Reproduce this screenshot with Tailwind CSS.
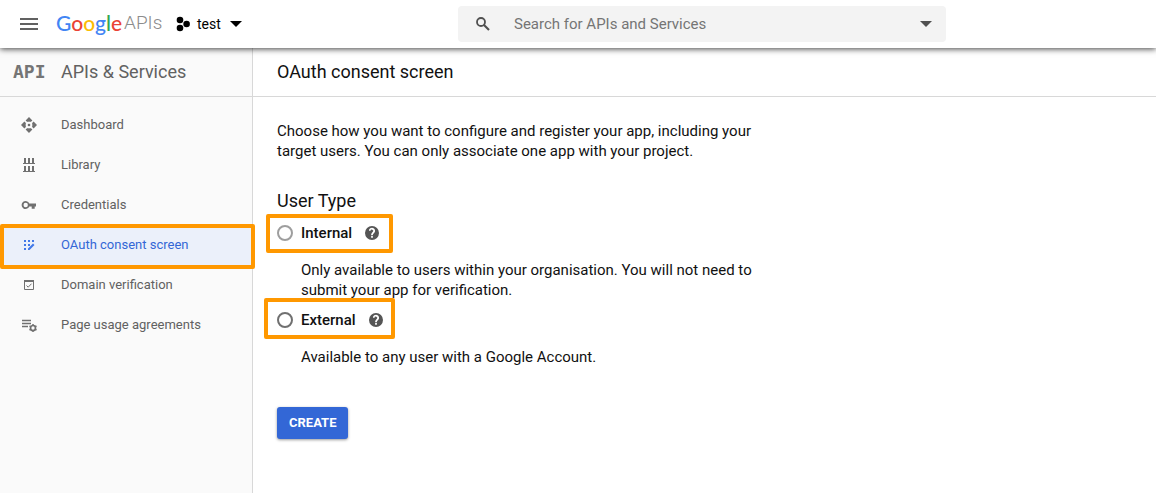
<!DOCTYPE html>
<html lang="en">
<head>
<meta charset="utf-8">
<meta name="viewport" content="width=device-width, initial-scale=1">
<title>OAuth consent screen</title>
<script src="https://cdn.jsdelivr.net/npm/@tailwindcss/browser@4"></script>
</head>
<body class="flex min-h-screen flex-col bg-white font-['Roboto',sans-serif] text-[#111]">
<header class="relative z-10 flex h-12 shrink-0 items-center bg-white shadow-[0_1px_6px_rgba(0,0,0,0.75)]">
  <div class="flex w-[458px] shrink-0 items-center pl-5">
    <button type="button" aria-label="Menu" class="mr-[18px]">
      <svg class="block h-3 w-[18px]" viewBox="0 0 18 12" fill="#616161"><path d="M0 0h18v2H0zM0 5h18v2H0zM0 10h18v2H0z"/></svg>
    </button>
    <a href="#" class="flex h-8 w-[120px] items-center whitespace-nowrap pb-[2px] leading-8">
      <span class="w-[68px] font-['Lato',sans-serif] text-[21px] font-medium"><span class="text-[#4285f4]">G</span><span class="text-[#ea4335]">o</span><span class="text-[#fbbc05]">o</span><span class="text-[#4285f4]">g</span><span class="text-[#34a853]">l</span><span class="text-[#ea4335]">e</span></span>
      <span class="text-[19px] font-light text-[#8c8c8c]">APIs</span>
    </a>
    <button type="button" class="flex items-center text-sm leading-5 text-black">
      <svg class="mr-[7px] block h-4 w-[14px]" viewBox="0 0 14 16"><circle cx="4" cy="4" r="3.3"/><circle cx="4" cy="12" r="3.3"/><circle cx="10.6" cy="8" r="3.3"/></svg>
      test
      <svg class="ml-[9px] block h-[6px] w-3" viewBox="0 0 12 6"><path d="M0 0h12L6 6z"/></svg>
    </button>
  </div>
  <form class="flex h-9 w-[488px] items-center rounded-sm bg-[#f3f3f3] pl-[18px] pr-[14px]">
    <label for="search" class="mr-6">
      <svg class="block h-[14px] w-[14px]" viewBox="0 0 14 14" fill="none" stroke="#505050"><circle cx="5" cy="5" r="4" stroke-width="1.8"/><path d="M8 8l5 5" stroke-width="2.1"/></svg>
    </label>
    <input id="search" type="text" aria-label="Search" placeholder="Search for APIs and Services" class="min-w-0 flex-1 bg-transparent pb-px text-[15px] leading-5 outline-none placeholder:text-[#757575]">
    <button type="button" aria-label="Search options"><svg class="block h-[6px] w-3" viewBox="0 0 12 6" fill="#505050"><path d="M0 0h12L6 6z"/></svg></button>
  </form>
</header>
<div class="flex flex-1">
  <aside class="w-[253px] shrink-0 border-r border-[#d8d8d8] bg-[#fafafa]">
    <div class="flex h-[49px] items-center border-b border-[#d8d8d8] pl-[13px]">
      <span class="w-12 font-['DejaVu_Sans_Mono',monospace] text-lg font-bold leading-6 text-[#757575]">API</span>
      <h2 class="text-lg leading-6 text-[#616161]">APIs &amp; Services</h2>
    </div>
    <nav class="pt-2 text-[13px] leading-5 text-[#616161]">
      <a href="#" class="flex h-10 items-center pl-[21px]">
        <svg class="mr-6 block h-4 w-4" viewBox="0 0 16 16" fill="#707070"><path d="M8 0l3.400 3.400L9.700 5.100 8 3.700 6.300 5.100 4.600 3.400zM8 16l3.400-3.400-1.700-1.700L8 12.300l-1.700-1.400-1.700 1.700zM0 8l3.400-3.400 1.700 1.700L3.700 8l1.400 1.700-1.700 1.700zM16 8l-3.400-3.400-1.700 1.700L12.300 8l-1.400 1.700 1.700 1.700z"/><path d="M8 1l2.200 2.400L8 5 5.800 3.400zM8 15l2.200-2.400L8 11l-2.200 1.600zM1 8l2.400-2.200L5 8l-1.600 2.200zM15 8l-2.400-2.200L11 8l1.600 2.200z"/><circle cx="8" cy="8" r="1.300"/></svg>Dashboard</a>
      <a href="#" class="flex h-10 items-center pl-[21px]">
        <svg class="mr-6 block h-4 w-4" viewBox="0 0 16 16" fill="#707070"><path d="M3 1h2v5h2V1h2v5h2V1h2v5h1v1H2V6h1zM3 9h2v5h2V9h2v5h2V9h2v5h1v1H2v-1h1z"/></svg>Library</a>
      <a href="#" class="flex h-10 items-center pl-[21px]">
        <svg class="mr-6 block h-4 w-4" viewBox="0 0 16 16" fill="#707070"><path fill-rule="evenodd" d="M8.300 6.500H15v3h-1.300v2.200h-3V9.500H8.300A4 4 0 1 1 8.300 6.500zM4.700 5.800a2.200 2.200 0 1 0 0 4.400 2.200 2.200 0 0 0 0-4.400z"/></svg>Credentials</a>
      <a href="#" aria-current="page" class="relative flex h-10 items-center bg-[#ebf0fa] pl-[21px] text-[#3367d6]">
        <svg class="mr-6 block h-4 w-4" viewBox="0 0 16 16" fill="#4279e8"><path d="M3 3h2v2H3zM7 3h2v2H7zM11 3h2v2h-2zM3 7h2v2H3zM7 7h2v2H7zM3 11h2v2H3zM7 11.500l5-5 1.500 1.500-5 5H7z"/></svg>OAuth consent screen
        <span class="pointer-events-none absolute -top-px left-0 -right-[3px] h-[45px] rounded-xs border-4 border-[#ff9800]"></span></a>
      <a href="#" class="flex h-10 items-center pl-[21px]">
        <svg class="mr-6 block h-4 w-4" viewBox="0 0 16 16" fill="none" stroke="#707070"><path d="M3.500 3.500h9v9h-9z"/><path d="M3 4h10" stroke-width="2"/><path d="M5.500 8.500l1.700 1.700 3.300-3.500"/></svg>Domain verification</a>
      <a href="#" class="flex h-10 items-center pl-[21px]">
        <svg class="mr-6 block h-4 w-4" viewBox="0 0 16 16" fill="none" stroke="#707070"><path d="M1 3.500h9M1 6.500h9M1 9.500h6" stroke-width="1.500"/><circle cx="12" cy="11" r="2.500" stroke-width="1.700"/><path d="M12 7v1.500M12 13.500V15M8.500 9l1.300.7M14.200 12.300l1.300.7M8.500 13l1.300-.7M14.200 9.700l1.300-.7" stroke-width="1.500"/></svg>Page usage agreements</a>
    </nav>
  </aside>
  <main class="min-w-0 flex-1 text-[15px] leading-5">
    <div class="flex h-[49px] items-center border-b border-[#d8d8d8] px-6"><h1 class="text-lg leading-6">OAuth consent screen</h1></div>
    <div class="max-w-[536px] px-6 pt-6">
      <p>Choose how you want to configure and register your app, including your target users. You can only associate one app with your project.</p>
      <fieldset>
        <legend class="pt-7 text-lg leading-6">User Type</legend>
        <div class="relative mt-2 flex h-6 w-fit items-center">
          <input id="internal" type="radio" name="type" class="h-4 w-4 appearance-none rounded-full border-2 border-[#9e9e9e] bg-white">
          <label for="internal" class="ml-2 font-medium">Internal</label>
          <button type="button" aria-label="Help with internal" class="ml-3"><svg class="block h-4 w-4" viewBox="0 0 24 24" fill="#555"><path d="M12 1.500A10.500 10.500 0 1 0 12 22.500 10.500 10.500 0 0 0 12 1.500zm1.300 17.500h-2.600v-2.600h2.600zm2.200-7.300l-1 1c-.8.800-1.200 1.300-1.200 2.600h-2.600v-.6c0-1.300.5-2.300 1.300-3.100l1.300-1.400a2 2 0 1 0-3.500-1.400H7.400a4.600 4.600 0 1 1 8.100 2.900z"/></svg></button>
          <span class="pointer-events-none absolute -bottom-2 -left-[11px] -right-[13px] -top-[7px] rounded-xs border-4 border-[#ff9800]"></span>
        </div>
        <p class="pl-6 pt-[15px]">Only available to users within your organisation. You will not need to submit your app for verification.</p>
        <div class="relative mt-2 flex h-6 w-fit items-center">
          <input id="external" type="radio" name="type" class="h-4 w-4 appearance-none rounded-full border-2 border-[#707070] bg-white">
          <label for="external" class="ml-2 font-medium">External</label>
          <button type="button" aria-label="Help with external" class="ml-3"><svg class="block h-4 w-4" viewBox="0 0 24 24" fill="#555"><path d="M12 1.500A10.500 10.500 0 1 0 12 22.500 10.500 10.500 0 0 0 12 1.500zm1.300 17.500h-2.600v-2.600h2.600zm2.200-7.300l-1 1c-.8.800-1.200 1.300-1.200 2.600h-2.600v-.6c0-1.300.5-2.300 1.300-3.100l1.300-1.400a2 2 0 1 0-3.500-1.400H7.400a4.600 4.600 0 1 1 8.100 2.900z"/></svg></button>
          <span class="pointer-events-none absolute -bottom-[7px] -left-[13px] -right-[11px] -top-[10px] rounded-xs border-4 border-[#ff9800]"></span>
        </div>
        <p class="pl-6 pt-[15px]">Available to any user with a Google Account.</p>
      </fieldset>
      <button type="button" class="mt-10 h-8 rounded-[3px] bg-[#3367d6] px-3 text-[13px] font-bold text-white shadow-[0_1px_3px_rgba(0,0,0,0.4)]">CREATE</button>
    </div>
  </main>
</div>
</body>
</html>
